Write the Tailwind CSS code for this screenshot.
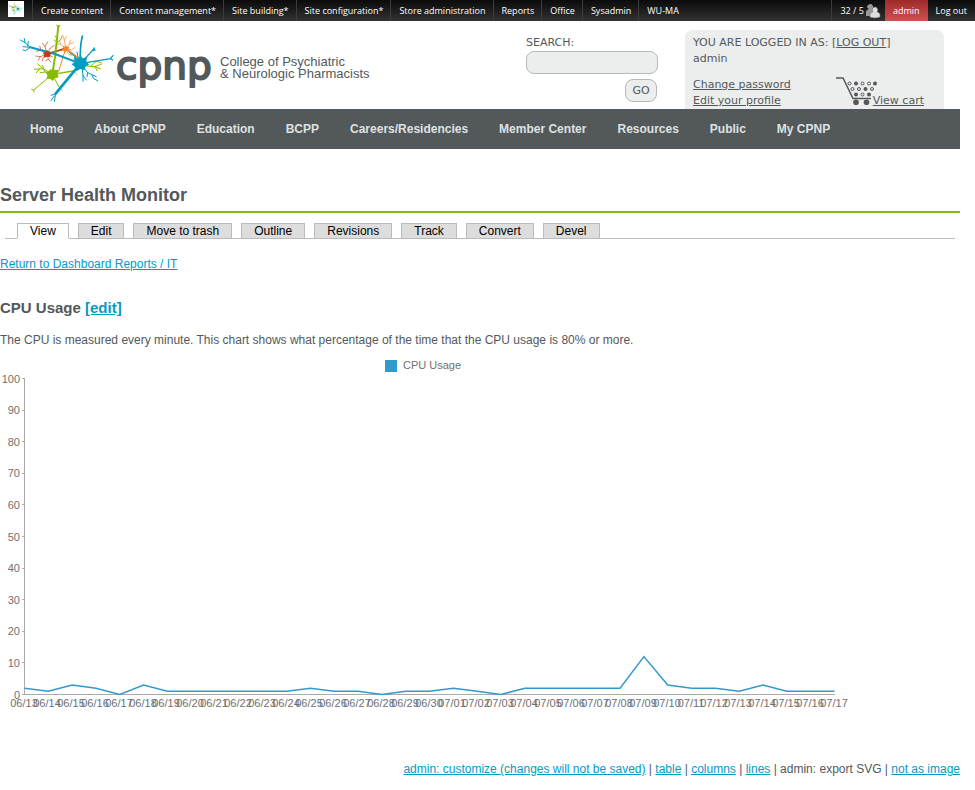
<!DOCTYPE html>
<html lang="en">
<head>
<meta charset="utf-8">
<title>Server Health Monitor | CPNP</title>
<script src="https://cdn.jsdelivr.net/npm/@tailwindcss/browser@4"></script>
</head>
<body class="bg-white font-['Liberation_Sans',sans-serif] text-xs text-[#53585b]">

<svg class="hidden" aria-hidden="true">
  <symbol id="neurons" viewBox="0 0 315 255">
    <g fill="none" stroke-linecap="round" stroke-linejoin="round">
      <g stroke="#bf3a0c" stroke-width="2">
        <path d="M96 96L150 80" stroke-width="5"/>
        <path d="M96 96L78 84L64 88M78 84L74 72M96 96L90 74L82 64M90 74L98 60M96 96L106 78L118 70M96 96L76 104L62 102M76 104L70 114M96 96L100 112L108 120M100 112L92 116M96 96L84 108L82 116M96 96L112 104"/>
      </g>
      <g stroke="#f5851f" stroke-width="2">
        <path d="M152 80L131 148" stroke-width="3"/>
        <path d="M152 80L196 112" stroke-width="5"/>
        <path d="M152 80L148 54L142 38M148 54L154 44M152 80L164 66L176 62M164 66L166 54M152 80L136 66L126 66M136 66L134 54M152 80L170 84L180 76M152 80L160 96L170 100"/>
      </g>
      <g stroke="#86bc00" stroke-width="3">
        <path d="M112 157Q122 100 126 50L130 12" stroke-width="6"/>
        <path d="M126 50L120 42M127 62L138 52L140 44M127 62L118 54M130 16L125 9M130 16L135 10"/>
        <path d="M112 157L174 147" stroke-width="4"/>
        <path d="M112 157L56 204L50 202M56 204L57 210M112 157L134 198L141 205M134 198L133 207"/>
        <path d="M112 157L84 140L58 142M84 140L68 126M74 141L64 152M112 157L90 150L76 152M90 150L82 130" stroke-width="3"/>
        <path d="M196 130L238 134L260 126M238 134L256 140M228 132L244 118L258 122M240 134L246 146" stroke-width="3"/>
        <path d="M174 147L186 156M174 147L188 140" stroke-width="2"/>
      </g>
      <g stroke="#009cc2" stroke-width="3">
        <path d="M196 125L120 96L46 76" stroke-width="6"/>
        <path d="M46 76L30 62L16 54M30 62L28 50M46 76L24 74M38 72L40 58M46 76L32 86L24 84"/>
        <path d="M196 125L122 215" stroke-width="8"/>
        <path d="M122 215L108 220M122 215L118 238M118 222L108 236"/>
        <path d="M196 125Q194 76 202 42" stroke-width="5"/>
        <path d="M196 125L232 86L238 78M232 86L240 84M196 125L286 110L294 101M286 110L293 114" stroke-width="4"/>
        <path d="M200 130L218 152L244 164M218 152L216 164M230 158L236 170L248 176M200 130L204 160L204 178M204 160L214 174M196 125L180 104L164 92M180 104L176 116M190 108L186 90" stroke-width="3"/>
      </g>
    </g>
    <path fill="#bf3a0c" d="M96 84L102 90L110 94L105 99L106 105L96 104L86 107L88 98L82 92L92 91Z"/>
    <path fill="#f5851f" d="M152 69L156 75L164 74L160 81L163 88L154 87L149 93L147 86L139 85L146 80L143 71L150 75Z"/>
    <path fill="#86bc00" d="M114 139L119 144L131 144L127 155L131 166L119 169L113 177L105 170L95 171L97 160L92 149L102 147L106 141L111 144Z"/>
    <path fill="#009cc2" d="M197 101L203 109L216 106L214 118L222 128L211 134L209 145L196 141L184 148L181 136L170 127L180 119L180 106L191 110Z"/>
  </symbol>
</svg>

<nav aria-label="Administration" class="flex h-[21px] items-stretch justify-between bg-linear-to-b from-[#0b0b0b] to-[#333] font-['Open_Sans',sans-serif] text-[9px] leading-[21px] whitespace-nowrap text-white">
  <div class="flex divide-x divide-[#3c3c3c]">
    <a href="#" aria-label="Home" class="flex w-[33px] items-start pt-px pl-2"><svg class="h-4 w-4 bg-white"><use href="#neurons"/></svg></a>
    <a href="#" class="pr-[7px] pl-2">Create content</a>
    <a href="#" class="pr-[7px] pl-2">Content management*</a>
    <a href="#" class="pr-[7px] pl-2">Site building*</a>
    <a href="#" class="pr-[7px] pl-2">Site configuration*</a>
    <a href="#" class="pr-[7px] pl-2">Store administration</a>
    <a href="#" class="pr-[7px] pl-2">Reports</a>
    <a href="#" class="pr-[7px] pl-2">Office</a>
    <a href="#" class="pr-[7px] pl-2">Sysadmin</a>
    <a href="#" class="pr-[7px] pl-2">WU-MA</a>
  </div>
  <div class="flex">
    <a href="#" class="flex items-center gap-px border-l border-[#3c3c3c] pr-1 pl-2">32 / 5
      <svg class="h-4 w-4" viewBox="0 0 16 16" aria-hidden="true">
        <path fill="#999" d="M5 1a3 3 0 0 1 3 4L7 7q3 1 3 3v3H1V9q0-2 3-3Q2 5 2 3.500Q3 1 5 1Z"/>
        <path fill="#ddd" stroke="#777" stroke-width=".5" d="M10 4a3 3 0 0 1 2 5q3 .5 3 3v2q-5 2-10 0v-2q0-2.500 3-3a3 3 0 0 1 2-5Z"/>
      </svg></a>
    <a href="#" class="bg-linear-to-b from-[#9e2a2a] to-[#d05050] px-2">admin</a>
    <a href="#" class="px-2">Log out</a>
  </div>
</nav>

<div class="max-w-[960px]">
  <header class="flex h-22 justify-between pr-4 pl-[15px]">
    <a href="#" aria-label="College of Psychiatric &amp; Neurologic Pharmacists" class="flex items-start">
      <svg class="mt-px h-[85px] w-[105px]" aria-hidden="true"><use href="#neurons"/></svg>
      <svg class="-ml-2 mt-6 h-[50px] w-[104px] overflow-visible" viewBox="0 0 104 50" aria-hidden="true"><text x="4" y="34" fill="#53585b" stroke="#53585b" stroke-width="2" stroke-linejoin="round" font-family="DejaVu Sans, sans-serif" font-size="39">cpnp</text></svg>
      <span class="mt-[35px] ml-1 text-[13px] leading-3 whitespace-nowrap">College of Psychiatric<br>&amp; Neurologic Pharmacists</span>
    </a>
    <div class="flex gap-[27px] font-['DejaVu_Sans',sans-serif] text-[11px] leading-4">
      <form class="flex w-[132px] flex-col pt-[14px]">
        <label for="search">SEARCH:</label>
        <input id="search" type="text" class="h-[23px] w-full rounded-lg border border-[#b4b9b9] bg-[#eceeed] px-2">
        <button type="button" class="mt-[5px] mr-px h-[23px] w-8 self-end rounded-lg border border-[#b4b9b9] bg-[#eceeed]">GO</button>
      </form>
      <div class="mt-[9px] flex w-[259px] flex-col justify-between rounded-t-lg bg-[#eceeed] px-2 pt-[5px]">
        <p>YOU ARE LOGGED IN AS: [<a href="#" class="underline">LOG OUT</a>]<br>admin</p>
        <div class="flex items-end justify-between pr-3">
          <p><a href="#" class="underline">Change password</a><br><a href="#" class="underline">Edit your profile</a></p>
          <a href="#" class="flex items-end underline">
            <svg class="-mr-[5px] mb-1 h-[28px] w-[42px]" viewBox="0 0 42 28" fill="none" stroke="#53585b" aria-hidden="true">
              <path stroke-width="1.500" d="M0 1H7L17 21.500H35"/>
              <g fill="#53585b" stroke="none"><circle cx="20" cy="25.200" r="2.800"/><circle cx="30.500" cy="25.200" r="2.800"/><circle cx="20" cy="6.500" r="2"/><circle cx="39" cy="6.500" r="2"/><circle cx="29.500" cy="12" r="2"/><circle cx="20" cy="17.500" r="2"/><circle cx="33" cy="17.500" r="2"/></g>
              <circle cx="13.500" cy="6.500" r="1.500"/><circle cx="26.500" cy="6.500" r="1.500"/><circle cx="33" cy="6.500" r="1.500"/><circle cx="16.500" cy="12" r="1.500"/><circle cx="23" cy="12" r="1.500"/><circle cx="36" cy="12" r="1.500"/><circle cx="26.500" cy="17.500" r="1.500"/>
            </svg>View cart</a>
        </div>
      </div>
    </div>
  </header>

  <nav aria-label="Main" class="flex h-10 items-center gap-[31px] bg-[#53585b] pl-[30px] font-bold whitespace-nowrap text-[#dfe1e1]">
    <a href="#">Home</a><a href="#">About CPNP</a><a href="#">Education</a><a href="#">BCPP</a><a href="#">Careers/Residencies</a><a href="#">Member Center</a><a href="#">Resources</a><a href="#">Public</a><a href="#">My CPNP</a>
  </nav>

  <main class="pt-8">
    <h1 class="border-b-2 border-[#88b80b] pt-1 pb-1.5 text-lg leading-5 font-bold">Server Health Monitor</h1>

    <nav aria-label="Tabs" class="mx-[5px] mt-[10px] flex h-4 gap-[9px] border-b border-[#bbb] pl-3 leading-[14px] text-black">
      <a href="#" class="h-4 border border-[#bbb] border-b-white bg-white px-3">View</a>
      <a href="#" class="h-4 border border-[#bbb] bg-[#ddd] px-3">Edit</a>
      <a href="#" class="h-4 border border-[#bbb] bg-[#ddd] px-3">Move to trash</a>
      <a href="#" class="h-4 border border-[#bbb] bg-[#ddd] px-3">Outline</a>
      <a href="#" class="h-4 border border-[#bbb] bg-[#ddd] px-3">Revisions</a>
      <a href="#" class="h-4 border border-[#bbb] bg-[#ddd] px-3">Track</a>
      <a href="#" class="h-4 border border-[#bbb] bg-[#ddd] px-3">Convert</a>
      <a href="#" class="h-4 border border-[#bbb] bg-[#ddd] px-3">Devel</a>
    </nav>

    <p class="mt-[17px] leading-4"><a href="#" class="text-[#009cc2] underline">Return to Dashboard Reports / IT</a></p>
    <h2 class="mt-[26px] text-[15px] leading-5 font-bold">CPU Usage <a href="#" class="text-[#009cc2] underline">[edit]</a></h2>
    <p class="mt-[14px] leading-4">The CPU is measured every minute. This chart shows what percentage of the time that the CPU usage is 80% or more.</p>

    <svg id="chart" class="mt-1 block h-[362px] w-[850px]" viewBox="0 0 850 362" role="img" aria-label="CPU Usage" font-family="Liberation Sans, sans-serif" font-size="11" fill="#707070">
      <rect x="385" y="2" width="12" height="12" transform="translate(0 6)" fill="#3399cc"/>
      <text x="403" y="17">CPU Usage</text>
      <path id="axes" fill="none" stroke="#aaa" shape-rendering="crispEdges"/>
      <g id="ylabels" text-anchor="end"></g>
      <g id="xlabels" text-anchor="middle"></g>
      <polyline id="series" fill="none" stroke="#3399cc" stroke-width="1.500"/>
    </svg>

    <p class="mt-[47px] text-right leading-4"><a href="#" class="text-[#009cc2] underline">admin: customize (changes will not be saved)</a> | <a href="#" class="text-[#009cc2] underline">table</a> | <a href="#" class="text-[#009cc2] underline">columns</a> | <a href="#" class="text-[#009cc2] underline">lines</a> | admin: export SVG | <a href="#" class="text-[#009cc2] underline">not as image</a></p>
  </main>
</div>

<script>
const usage = [2,1,3,2,0,3,1,1,1,1,1,1,2,1,1,0,1,1,2,1,0,2,2,2,2,2,12,3,2,2,1,3,1,1,1];
const left = 24.5, right = 834.5, top0 = 26.5, bottom = 342.5;
const px = i => left + i * (right - left) / (usage.length - 1);
const py = v => bottom - v * (bottom - top0) / 100;
const label = (parent, x, y, text) => {
  const t = document.createElementNS('http://www.w3.org/2000/svg', 'text');
  t.setAttribute('x', x); t.setAttribute('y', y); t.textContent = text;
  document.getElementById(parent).appendChild(t);
};
let d = `M${left} ${top0}V${bottom}H${right}`;
for (let v = 0; v <= 100; v += 10) {
  d += `M${left - 3} ${py(v)}H${left}`;
  label('ylabels', 20, Math.round(py(v)) + 4, v);
}
document.getElementById('axes').setAttribute('d', d);
usage.forEach((v, i) => {
  const day = new Date(Date.UTC(2012, 5, 13 + i)).toISOString();
  label('xlabels', Math.round(px(i)) - 1, bottom + 12.5, day.slice(5, 7) + '/' + day.slice(8, 10));
});
document.getElementById('series').setAttribute('points', usage.map((v, i) => px(i) + ',' + py(v)).join(' '));
</script>
</body>
</html>
